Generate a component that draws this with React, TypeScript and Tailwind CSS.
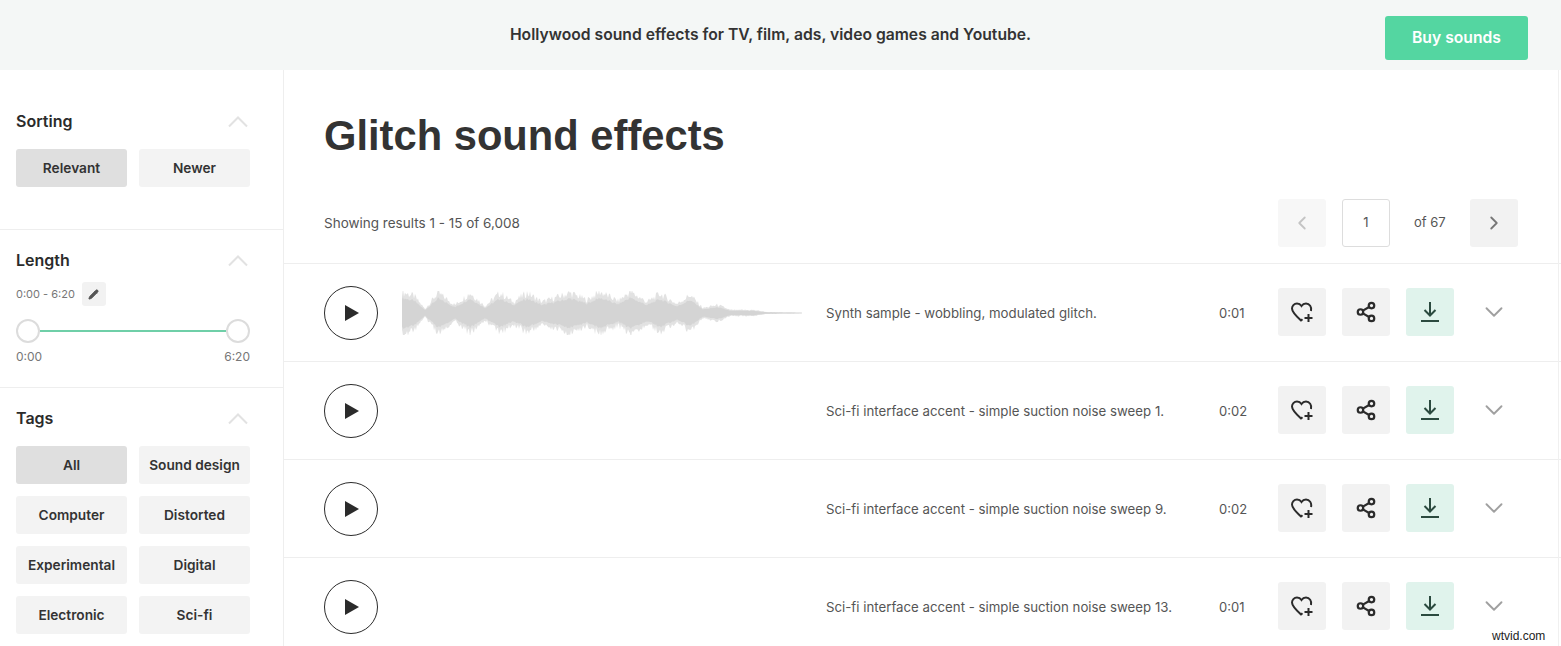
import React from "react";
import { ChevronDown, ChevronLeft, ChevronRight, Pencil, Share2 } from "lucide-react";

const rows = [
  { text: "Synth sample - wobbling, modulated glitch.", time: "0:01", wave: true },
  { text: "Sci-fi interface accent - simple suction noise sweep 1.", time: "0:02" },
  { text: "Sci-fi interface accent - simple suction noise sweep 9.", time: "0:02" },
  { text: "Sci-fi interface accent - simple suction noise sweep 13.", time: "0:01" },
];

const tags = ["All", "Sound design", "Computer", "Distorted", "Experimental", "Digital", "Electronic", "Sci-fi"];

// envelope of the clip: [x, amplitude]
const envelope = [
  [0, 21], [12, 17], [23, 4], [36, 20], [53, 8], [68, 20], [83, 7], [98, 20], [111, 11], [125, 20],
  [140, 11], [168, 20], [185, 13], [198, 21], [216, 12], [228, 21], [245, 11], [258, 19], [275, 9],
  [288, 18], [301, 5], [316, 8], [328, 3], [351, 3], [365, 1], [400, 0.4],
];

function ampAt(x: number) {
  for (let i = 1; i < envelope.length; i++) {
    const [x0, a0] = envelope[i - 1];
    const [x1, a1] = envelope[i];
    if (x <= x1) return a0 + ((a1 - a0) * (x - x0)) / (x1 - x0);
  }
  return 0.4;
}

function buildWave(scale: number, spike: number) {
  let top = "M0 22";
  let bottom = "";
  for (let x = 0; x <= 400; x++) {
    const noise = Math.sin(x * 12.9898) * 43758.5453;
    const r = noise - Math.floor(noise);
    const noise2 = Math.sin(x * 78.233) * 12345.678;
    const r2 = noise2 - Math.floor(noise2);
    const base = ampAt(x) * scale;
    top += ` L${x} ${(22 - base * (1 - spike + spike * 2 * r)).toFixed(1)}`;
    bottom = ` L${x} ${(22 + base * (1 - spike + spike * 2 * r2)).toFixed(1)}` + bottom;
  }
  return top + bottom + " Z";
}

const waveOuter = buildWave(1, 0.22);
const waveInner = buildWave(0.72, 0.1);

function Filter({ children }: { children: string }) {
  return <h3 className="text-[16px] leading-[20px] font-semibold text-[#2b2b2b]">{children}</h3>;
}

function Collapse() {
  return (
    <svg width="20" height="12" viewBox="0 0 20 12" fill="none" stroke="#e2e2e2" strokeWidth="2" className="mr-[2px] mt-[2px]">
      <path d="M1 10.5 L10 1.5 L19 10.5" />
    </svg>
  );
}

function Chip({ label, active }: { label: string; active?: boolean }) {
  return (
    <button className={`h-[38px] rounded-[3px] text-[13.7px] font-semibold text-[#333] whitespace-nowrap ${active ? "bg-[#dfdfdf]" : "bg-[#f3f3f3]"}`}>
      {label}
    </button>
  );
}

function Row({ text, time, wave }: { text: string; time: string; wave?: boolean }) {
  return (
    <div className="h-[98px] shrink-0 border-t border-[#eeeeee] flex items-center pl-[40px]">
      <div className="w-[54px] h-[54px] rounded-full border border-[#2b2b2b] flex items-center justify-center shrink-0">
        <svg width="16" height="18" viewBox="0 0 16 18" className="ml-[2px]">
          <path d="M1 1 L15 9 L1 17 Z" fill="#2b2b2b" />
        </svg>
      </div>
      <div className="w-[400px] h-[44px] ml-[24px] shrink-0">
        {wave && (
          <svg width="400" height="44" viewBox="0 0 400 44">
            <path d={waveOuter} fill="#e2e2e2" />
            <path d={waveInner} fill="#d4d4d4" />
          </svg>
        )}
      </div>
      <p className="ml-[24px] mt-[2px] w-[393px] shrink-0 text-[13.25px] text-[#555]">{text}</p>
      <span className="w-[34px] mt-[2px] shrink-0 text-[13px] text-[#555]">{time}</span>
      <div className="ml-[25px] mb-[2px] flex gap-[16px]">
        <button className="w-[48px] h-[48px] rounded-[3px] bg-[#f2f2f2] flex items-center justify-center">
          <svg width="24" height="24" viewBox="0 0 24 24" fill="none" stroke="#2b2b2b" strokeWidth="2">
            <path d="M21 11 C22 7 19.5 3.5 16 3.5 C14 3.5 12.5 4.5 11.5 6 C10.5 4.5 9 3.5 7 3.5 C4 3.5 2 6 2 8.5 C2 12 5.5 15.5 11 20.5 L12.5 19.2" />
            <path d="M18.5 14 V22 M14.5 18 H22.5" />
          </svg>
        </button>
        <button className="w-[48px] h-[48px] rounded-[3px] bg-[#f2f2f2] flex items-center justify-center">
          <Share2 className="w-[22px] h-[22px] text-[#2b2b2b]" strokeWidth={2.4} />
        </button>
        <button className="w-[48px] h-[48px] rounded-[3px] bg-[#e0f3ec] flex items-center justify-center">
          <svg width="20" height="22" viewBox="0 0 20 22" fill="none" stroke="#2b4a3f" strokeWidth="2">
            <path d="M10 1 V14 M4.5 9 L10 14.5 L15.5 9 M1 20 H19" />
          </svg>
        </button>
      </div>
      <ChevronDown className="ml-[25px] mb-[2px] w-[30px] h-[30px] text-[#a0a0a0]" strokeWidth={1.5} />
    </div>
  );
}

export default function App() {
  return (
    <div className="relative h-[646px] w-[1561px] overflow-hidden bg-white font-['Inter',sans-serif] text-[#2b2b2b]">
      <header className="h-[70px] bg-[#f4f7f6] flex items-center justify-center relative">
        <p className="text-[15.7px] pb-[1px] pr-[20px] font-semibold text-[#333]">Hollywood sound effects for TV, film, ads, video games and Youtube.</p>
        <button className="absolute right-[33px] top-[16px] w-[143px] h-[44px] pb-[1px] rounded-[3px] bg-[#54d6a1] text-white text-[15.7px] font-semibold">
          Buy sounds
        </button>
      </header>

      <div className="flex h-[576px]">
        <aside className="w-[284px] shrink-0 border-r border-[#eeeeee]">
          <section className="h-[160px] border-b border-[#eeeeee] pt-[39px] px-[16px]">
            <div className="flex h-[24px] items-center justify-between w-[234px]">
              <Filter>Sorting</Filter>
              <Collapse />
            </div>
            <div className="grid grid-cols-[111px_111px] gap-x-[12px] mt-[16px]">
              <Chip label="Relevant" active />
              <Chip label="Newer" />
            </div>
          </section>

          <section className="h-[158px] border-b border-[#eeeeee] pt-[18px] px-[16px]">
            <div className="flex h-[24px] items-center justify-between w-[234px]">
              <Filter>Length</Filter>
              <Collapse />
            </div>
            <div className="flex items-center mt-[10px] gap-[8px]">
              <span className="text-[11px] text-[#777]">0:00 - 6:20</span>
              <span className="w-[24px] h-[24px] rounded-[3px] bg-[#f2f2f2] flex items-center justify-center -ml-[1px]">
                <Pencil className="w-[11px] h-[11px] text-[#555] fill-[#555]" />
              </span>
            </div>
            <div className="flex items-center w-[234px] mt-[13px]">
              <span className="w-[24px] h-[24px] rounded-full border-2 border-[#dcdcdc] bg-white shrink-0" />
              <span className="flex-1 h-[2px] bg-[#6fcfa8]" />
              <span className="w-[24px] h-[24px] rounded-full border-2 border-[#dcdcdc] bg-white shrink-0" />
            </div>
            <div className="flex justify-between w-[234px] mt-[5px] text-[12px] text-[#777]">
              <span>0:00</span>
              <span>6:20</span>
            </div>
          </section>

          <section className="pt-[18px] px-[16px]">
            <div className="flex h-[24px] items-center justify-between w-[234px]">
              <Filter>Tags</Filter>
              <Collapse />
            </div>
            <div className="grid grid-cols-[111px_111px] gap-[12px] mt-[16px]">
              {tags.map((t, i) => (
                <Chip key={t} label={t} active={i === 0} />
              ))}
            </div>
          </section>
        </aside>

        <main className="flex-1 min-w-0 flex flex-col">
          <h1 className="pl-[40px] pt-[40px] text-[41.7px] leading-[52px] font-bold text-[#333] font-['Liberation_Sans',sans-serif]">Glitch sound effects</h1>
          <div className="h-[48px] mt-[37px] mb-[16px] pl-[40px] flex items-center shrink-0">
            <span className="text-[13.5px] mt-[1px] text-[#555]">Showing results 1 - 15 of 6,008</span>
            <div className="ml-auto mr-[43px] flex items-center">
              <button className="w-[48px] h-[48px] rounded-[3px] bg-[#f7f7f7] flex items-center justify-center">
                <ChevronLeft className="w-[22px] h-[22px] text-[#c4c4c4]" strokeWidth={2} />
              </button>
              <div className="ml-[16px] w-[48px] h-[48px] rounded-[3px] border border-[#dddddd] flex items-center justify-center text-[13px] text-[#555]">
                1
              </div>
              <span className="ml-[24px] w-[56px] text-[13px] text-[#555]">of 67</span>
              <button className="w-[48px] h-[48px] rounded-[3px] bg-[#f2f2f2] flex items-center justify-center">
                <ChevronRight className="w-[22px] h-[22px] text-[#777]" strokeWidth={2} />
              </button>
            </div>
          </div>
          {rows.map((r) => (
            <Row key={r.text} {...r} />
          ))}
        </main>
      </div>

      <span className="absolute right-[2px] top-[70px] bottom-0 w-[1px] bg-[#f0f0f0]" />
      <span className="absolute left-[1492px] top-[628px] text-[12px] leading-[16px] text-[#222] font-['Liberation_Sans',sans-serif]">wtvid.com</span>
    </div>
  );
}
